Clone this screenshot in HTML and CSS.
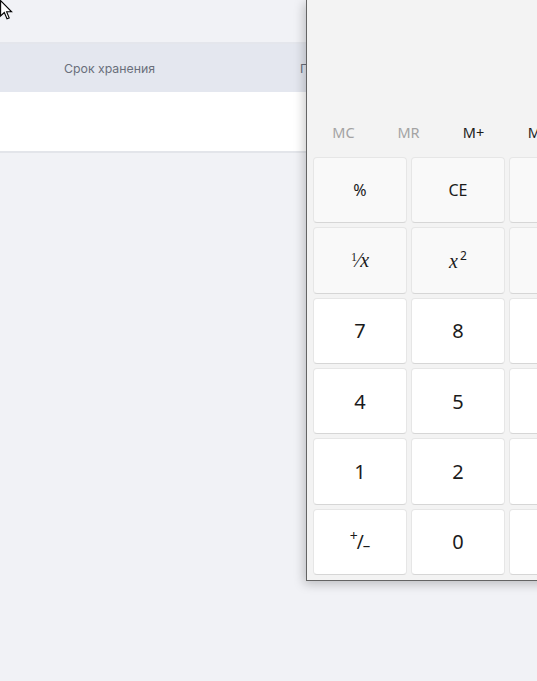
FILE: index.html
```html
<!DOCTYPE html>
<html lang="ru">
<head>
<meta charset="utf-8">
<title>Calculator</title>
<link rel="stylesheet" href="styles.css">
</head>
<body>
<div class="page">
  <div class="topbar"></div>
  <div class="thead">
    <div class="th th-first"></div>
    <div class="th">Срок хранения</div>
    <div class="th">Поставщик</div>
  </div>
  <div class="trow"></div>
</div>

<div class="calc">
  <div class="display"></div>
  <div class="memory">
    <span class="mem off">MC</span>
    <span class="mem off">MR</span>
    <span class="mem">M+</span>
    <span class="mem">M&minus;</span>
    <span class="mem">MS</span>
  </div>
  <div class="keys">
    <button class="key fn">%</button>
    <button class="key fn">CE</button>
    <button class="key fn">C</button>
    <button class="key fn">&#9003;</button>

    <button class="key fn"><span class="frac"><sup>1</sup>&#8260;<i>x</i></span></button>
    <button class="key fn"><span class="math"><i>x</i><sup>2</sup></span></button>
    <button class="key fn"><span class="math"><sup>2</sup>&radic;<i>x</i></span></button>
    <button class="key fn">&divide;</button>

    <button class="key num">7</button>
    <button class="key num">8</button>
    <button class="key num">9</button>
    <button class="key fn">&times;</button>

    <button class="key num">4</button>
    <button class="key num">5</button>
    <button class="key num">6</button>
    <button class="key fn">&minus;</button>

    <button class="key num">1</button>
    <button class="key num">2</button>
    <button class="key num">3</button>
    <button class="key fn">+</button>

    <button class="key num pm"><span class="pm-plus">+</span>/<span class="pm-minus">&ndash;</span></button>
    <button class="key num">0</button>
    <button class="key num">,</button>
    <button class="key eq">=</button>
  </div>
</div>

<svg class="cursor" width="13" height="20" viewBox="0 0 13 20">
  <path d="M0.6 0.6 L0.6 16 L4.3 12.5 L7 18.8 L9.2 17.9 L6.6 11.8 L11.6 11.8 Z" fill="#fff" stroke="#000" stroke-width="1.1" stroke-linejoin="miter"/>
</svg>
</body>
</html>
```

FILE: styles.css
```css
html, body {
  margin: 0;
  padding: 0;
  height: 100%;
  overflow: hidden;
}

body {
  background: #f1f2f6;
  font-family: "Inter", "Roboto", "Liberation Sans", sans-serif;
  position: relative;
}

.page {
  display: flex;
  flex-direction: column;
}

.topbar {
  height: 42px;
  border-bottom: 2px solid #e4e6ec;
}

.thead {
  height: 48px;
  background: #e4e7ef;
  display: grid;
  grid-template-columns: 64px 236px 1fr;
  align-items: center;
}

.th {
  font-size: 12.3px;
  color: #6a6f7b;
  white-space: nowrap;
}

.trow {
  height: 59px;
  background: #ffffff;
  border-bottom: 2px solid #e3e5ea;
}

/* Calculator window */
.calc {
  position: absolute;
  left: 306px;
  top: 0;
  width: 430px;
  height: 580px;
  background: #f3f3f3;
  border-left: 1px solid #646464;
  border-bottom: 1px solid #646464;
  box-shadow: -2px 3px 10px rgba(0, 0, 0, 0.22);
  display: flex;
  flex-direction: column;
  font-family: "Noto Sans", "Open Sans", sans-serif;
  color: #1b1b1b;
}

.display {
  height: 112px;
}

.memory {
  height: 40px;
  display: flex;
  align-items: center;
  padding-left: 4px;
  margin-bottom: 5px;
}

.mem {
  width: 65px;
  text-align: center;
  font-size: 14.5px;
  color: #1b1b1b;
}

.mem.off {
  color: #a3a3a3;
}

.keys {
  display: grid;
  grid-template-columns: repeat(4, 94px);
  grid-template-rows: repeat(6, 1fr);
  column-gap: 4px;
  row-gap: 4px;
  height: 418px;
  padding-left: 6px;
}

.key {
  margin: 0;
  padding: 0;
  border: 1px solid #e6e6e6;
  border-bottom-color: #d6d6d6;
  border-radius: 4px;
  font-family: inherit;
  color: #1b1b1b;
  display: flex;
  align-items: center;
  justify-content: center;
}

.key.fn {
  background: #f9f9f9;
  font-size: 16px;
}

.key.num {
  background: #ffffff;
  font-size: 20px;
}

.key.eq {
  background: #005fb8;
  color: #fff;
  font-size: 20px;
}

.frac, .math {
  font-family: "Liberation Serif", serif;
  font-size: 20px;
}

.frac sup {
  font-size: 12px;
  font-style: normal;
  vertical-align: 6px;
}

.math sup {
  font-size: 12px;
  vertical-align: 8px;
  margin-left: 2px;
  font-family: "Noto Sans", sans-serif;
}

.key.pm {
  font-size: 19px;
  align-items: center;
}

.pm-plus {
  font-size: 14px;
  position: relative;
  top: -6px;
  margin-right: -1px;
}

.pm-minus {
  font-size: 15px;
  position: relative;
  top: 3px;
  margin-left: -1px;
}

.cursor {
  position: absolute;
  left: 0;
  top: 0;
}
```
